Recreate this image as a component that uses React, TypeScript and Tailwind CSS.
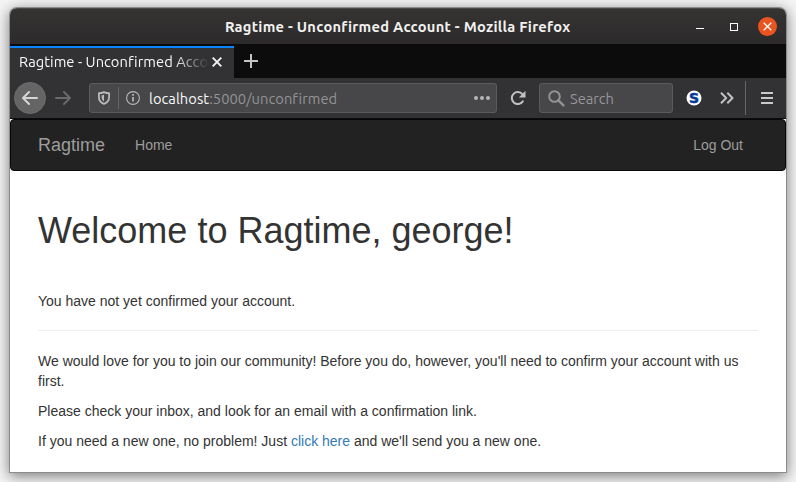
import type { ReactNode } from "react";

function TitleBar() {
  return (
    <header className="flex h-9 shrink-0 items-center bg-linear-to-b from-[#353432] to-[#2c2a2b] border-t border-[#4b4a49]">
      <div className="w-[215px] shrink-0" />
      <h1 className="w-[346px] shrink-0 whitespace-nowrap text-[14.667px] font-bold leading-5 tracking-[0.27px] text-[#f2f1f0]">
        Ragtime - Unconfirmed Account - Mozilla Firefox
      </h1>
      <div className="flex flex-1 items-center justify-end pr-[9px]">
        <span className="mt-[3px] mr-[26px] h-px w-2 bg-white" />
        <span className="mr-5 size-2 border border-white" />
        <button className="flex size-[19px] items-center justify-center rounded-full bg-[#e95420]">
          <svg width="9" height="9" viewBox="0 0 9 9" stroke="#fff" strokeWidth="1.3">
            <path d="M.7.7l7.6 7.6M8.3.7L.7 8.3" />
          </svg>
        </button>
      </div>
    </header>
  );
}

function TabStrip() {
  return (
    <div className="flex h-[34px] shrink-0 bg-[#0c0c0d] pt-[2px]">
      <div className="flex w-56 items-center border-t-2 border-[#0a84ff] bg-[#323234] pl-[9px]">
        <span className="mb-[2px] w-[188px] overflow-hidden whitespace-nowrap text-[14.667px] leading-5 tracking-[0.05px] text-[#f9f9fa] [mask-image:linear-gradient(to_right,black_155px,transparent_190px)]">
          Ragtime - Unconfirmed Account
        </span>
        <svg className="ml-[5px] mb-[2px]" width="10" height="10" viewBox="0 0 10 10" stroke="#f4f4f4" strokeWidth="1.9">
          <path d="M.7.7l8.6 8.6M9.3.7L.7 9.3" />
        </svg>
      </div>
      <svg className="mt-2 ml-[10px]" width="14" height="14" viewBox="0 0 14 14" stroke="#c4c4c5" strokeWidth="2">
        <path d="M7 0v14M0 7h14" />
      </svg>
    </div>
  );
}

function Field({ className, children }: { className: string; children: ReactNode }) {
  return (
    <div className={`flex h-[30px] items-center rounded-[3px] border border-[#5b5b5e] bg-[#474749] ${className}`}>
      {children}
    </div>
  );
}

function Toolbar() {
  return (
    <div className="flex h-10 shrink-0 items-center bg-[#323234] pl-1">
      <button className="flex size-8 items-center justify-center rounded-full border border-[#6c6c6d] bg-[#656566]">
        <svg width="16" height="16" viewBox="0 0 16 16" fill="none" stroke="#d5d5d6" strokeWidth="2" strokeLinecap="round" strokeLinejoin="round">
          <path d="M15 8H1M7 2L1 8l6 6" />
        </svg>
      </button>
      <svg className="ml-[9px]" width="16" height="16" viewBox="0 0 16 16" fill="none" stroke="#6a6a6c" strokeWidth="2" strokeLinecap="round" strokeLinejoin="round">
        <path d="M1 8h14M9 2l6 6-6 6" />
      </svg>
      <Field className="ml-[18px] w-[408px] pl-[7px]">
        <svg width="14" height="14" viewBox="0 0 14 14" fill="none" stroke="#b9b9ba">
          <path d="M7 1.1c1.7.8 3.4 1.1 5.1 1.1V6c0 3.2-1.7 5.6-5.1 6.9C3.6 11.6 1.9 9.2 1.9 6V2.2C3.6 2.2 5.3 1.9 7 1.1z" strokeWidth="1.8" strokeLinejoin="round" />
          <path d="M7 3.8v6.7C5.3 9.4 4.6 8 4.6 6V4.4z" fill="#b9b9ba" stroke="none" />
        </svg>
        <span className="ml-[7px] h-[22px] w-px bg-[#66666b]" />
        <svg className="ml-[7px]" width="14" height="14" viewBox="0 0 14 14" fill="none" stroke="#b9b9ba">
          <circle cx="7" cy="7" r="6.4" strokeWidth="1.1" />
          <path d="M7 6v4.5M7 3v1.8" strokeWidth="1.7" />
        </svg>
        <span className="ml-[9px] mt-px flex-1 whitespace-nowrap text-[14.667px] leading-5 tracking-[0.06px] text-[#939395]">
          <span className="text-[#f9f9fa]">localhost</span>:5000/unconfirmed
        </span>
        <svg className="mr-[6px]" width="16" height="4" viewBox="0 0 16 4" fill="#b5b5b6">
          <circle cx="2" cy="2" r="2" />
          <circle cx="8" cy="2" r="2" />
          <circle cx="14" cy="2" r="2" />
        </svg>
      </Field>
      <svg className="ml-[13px]" width="16" height="16" viewBox="0 0 16 16" fill="none" stroke="#c1c1c2" strokeWidth="2">
        <path d="M12.8 11.4A6 6 0 1 1 12.4 4.2" strokeLinecap="round" />
        <path d="M15.5.8v6.7H8.8z" fill="#c1c1c2" stroke="none" />
      </svg>
      <Field className="ml-[13px] w-[134px] pl-2">
        <svg width="17" height="17" viewBox="0 0 17 17" fill="none" stroke="#929294" strokeWidth="2">
          <circle cx="6.5" cy="6.5" r="5.3" />
          <path d="M10.4 10.4l5 5" strokeWidth="2.4" strokeLinecap="round" />
        </svg>
        <span className="ml-[5px] mt-px text-[14.667px] leading-5 tracking-[-0.05px] text-[#969698]">Search</span>
      </Field>
      <svg className="ml-[13px]" width="16" height="16" viewBox="0 0 16 16">
        <circle cx="8" cy="8" r="7.5" fill="#fff" />
        <text
          x="8"
          y="13"
          textAnchor="middle"
          className="fill-[#073a94] stroke-[#073a94] stroke-[0.5px] font-['DejaVu_Sans',sans-serif] text-[14px] font-bold"
        >
          S
        </text>
      </svg>
      <svg className="ml-[18px]" width="14" height="12" viewBox="0 0 14 12" fill="none" stroke="#c1c1c2" strokeWidth="2" strokeLinejoin="round">
        <path d="M1 .7L6.2 6 1 11.3M7.3.7L12.5 6l-5.2 5.3" />
      </svg>
      <span className="ml-[11px] h-[34px] w-px self-end mb-[3px] bg-[#666668]" />
      <span className="ml-[15px] flex h-3 w-3 flex-col justify-between">
        <span className="h-[2px] bg-[#c9c9ca]" />
        <span className="h-[2px] bg-[#c9c9ca]" />
        <span className="h-[2px] bg-[#c9c9ca]" />
      </span>
    </div>
  );
}

function Page() {
  return (
    <div className="flex-1 bg-white font-['Liberation_Sans',Arial,sans-serif] text-[14px] leading-5 text-[#333]">
      <nav className="flex h-[52px] items-center rounded-[4px] border border-[#080808] bg-[#222] pl-[27px] pr-[42px] text-[#9d9d9d]">
        <a className="text-lg leading-5">Ragtime</a>
        <a className="ml-[30px]">Home</a>
        <a className="ml-auto">Log Out</a>
      </nav>
      <main className="px-7 pt-10">
        <h2 className="text-4xl leading-10">Welcome to Ragtime, george!</h2>
        <p className="mt-10">You have not yet confirmed your account.</p>
        <hr className="mt-[19px] mb-5 border-t border-[#eee]" />
        <p>
          We would love for you to join our community! Before you do, however, you'll need to confirm your account with us
          first.
        </p>
        <p className="mt-[10px]">Please check your inbox, and look for an email with a confirmation link.</p>
        <p className="mt-[10px]">
          If you need a new one, no problem! Just <a className="text-[#337ab7]">click here</a> and we'll send you a new
          one.
        </p>
      </main>
    </div>
  );
}

export default function App() {
  return (
    <div className="h-[482px] w-[796px] overflow-hidden bg-[#f4f4f4] px-[10px] pt-2 font-['Ubuntu','Noto_Sans',sans-serif]">
      <div className="flex h-[464px] flex-col rounded-t-[7px] shadow-[0_0_0_1px_#8c8c8c,0_3px_14px_1px_rgba(0,0,0,0.5)]">
        <div className="flex flex-1 flex-col overflow-hidden rounded-t-[7px]">
          <TitleBar />
          <TabStrip />
          <Toolbar />
          <div className="h-px shrink-0 bg-[#0c0c0d]" />
          <Page />
        </div>
      </div>
    </div>
  );
}
